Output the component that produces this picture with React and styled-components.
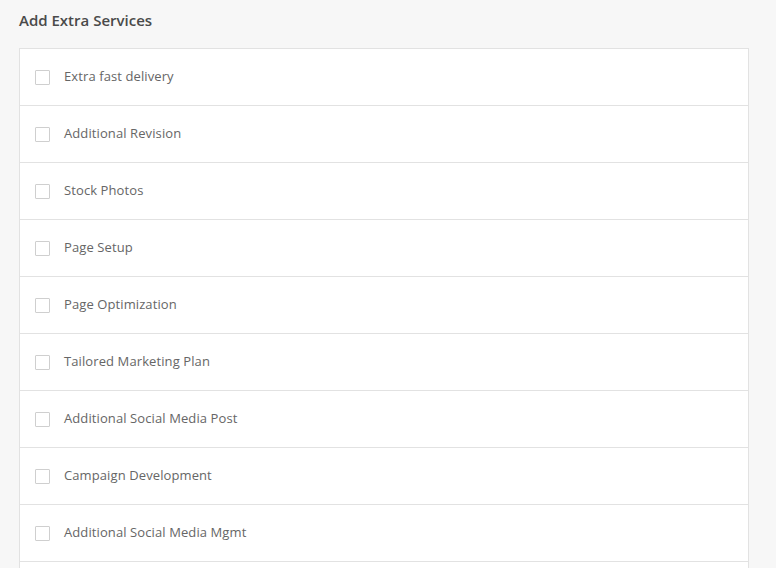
import React from "react";
import styled, { createGlobalStyle } from "styled-components";

const Global = createGlobalStyle`
  html, body { margin: 0; padding: 0; background: #f7f7f7; }
  body { font-family: "Open Sans", "Liberation Sans", sans-serif; }
`;

const Page = styled.div`
  padding: 10px 27px 0 19px;
  width: 776px;
  box-sizing: border-box;
  height: 568px;
  overflow: hidden;
`;

const Title = styled.h2`
  margin: 0 0 18px 0;
  font-size: 15px;
  font-weight: 600;
  line-height: 20px;
  color: #4a4a4a;
`;

const Card = styled.div`
  background: #fff;
  border: 1px solid #e2e2e2;
  border-bottom: none;
  padding-bottom: 20px;
`;

const Row = styled.label`
  display: flex;
  align-items: center;
  gap: 14px;
  height: 56px;
  padding-left: 15px;
  border-bottom: 1px solid #e2e2e2;
  cursor: pointer;
`;

const Box = styled.span`
  width: 13px;
  height: 13px;
  border: 1px solid #cfcfcf;
  border-radius: 1px;
  background: #fff;
  flex: none;
`;

const Label = styled.span`
  font-size: 13px;
  letter-spacing: 0.1px;
  color: #666;
  margin-top: -2px;
`;

const items = [
  "Extra fast delivery",
  "Additional Revision",
  "Stock Photos",
  "Page Setup",
  "Page Optimization",
  "Tailored Marketing Plan",
  "Additional Social Media Post",
  "Campaign Development",
  "Additional Social Media Mgmt",
];

export default function App() {
  return (
    <>
      <Global />
      <Page>
        <Title>Add Extra Services</Title>
        <Card>
          {items.map((t) => (
            <Row key={t}>
              <Box />
              <Label>{t}</Label>
            </Row>
          ))}
        </Card>
      </Page>
    </>
  );
}
